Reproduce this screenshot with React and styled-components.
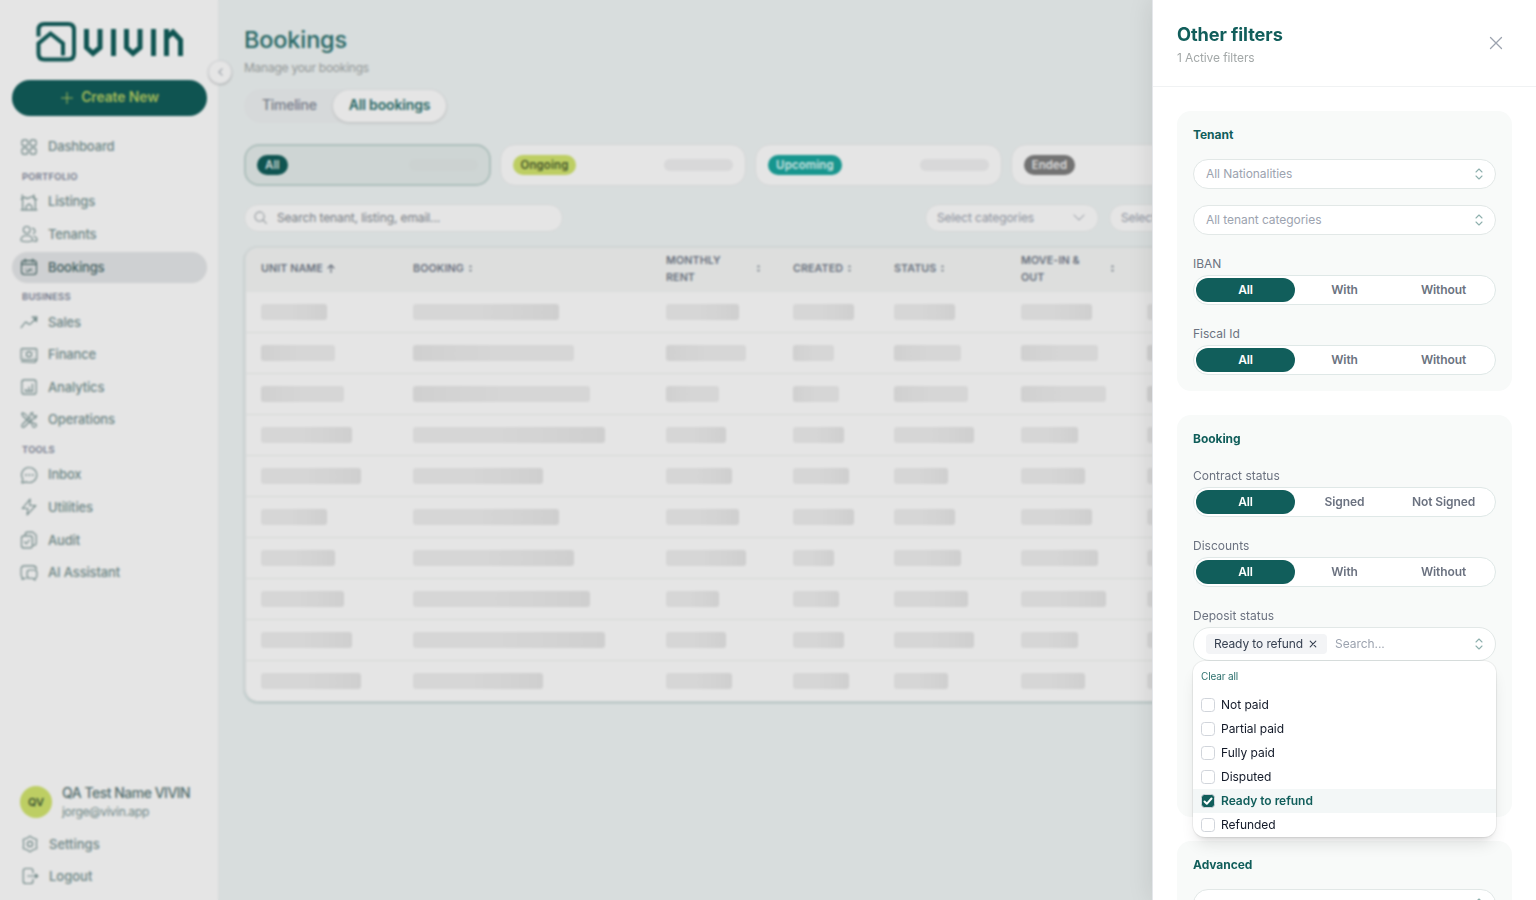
import React from 'react';
import styled, { createGlobalStyle, css } from 'styled-components';

const GlobalStyle = createGlobalStyle`
    * {
        box-sizing: border-box;
    }

    body {
        margin: 0;
        overflow: hidden;
        font-family: Inter, "Liberation Sans", sans-serif;
        font-size: 12px;
        color: #111827;
    }

    button, input {
        font: inherit;
        letter-spacing: inherit;
    }
`

const Page = styled.div`
    display: flex;
    width: 1536px;
    height: 900px;
    overflow: hidden;
    background-color: #f1f6f6;
`

/* sidebar */

const Sidebar = styled.aside`
    position: relative;
    display: flex;
    flex-direction: column;
    flex: none;
    width: 218px;
    padding: 22px 11px 8px 12px;
    background-color: #fff;
`

const Logo = styled.svg`
    display: block;
    flex: none;
    width: 148px;
    height: 40px;
    margin-left: 24px;
    fill: none;
    stroke: #115e5b;
`

const Collapse = styled.button`
    position: absolute;
    top: 60px;
    left: 208px;
    display: flex;
    align-items: center;
    justify-content: center;
    width: 24px;
    height: 24px;
    padding: 0;
    border: 1px solid #e9ebee;
    border-radius: 50%;
    background-color: #fff;
    box-shadow: 0 1px 2px rgba(0, 0, 0, .2);
    color: #b3b9c2;
`

const CreateButton = styled.button`
    display: flex;
    align-items: center;
    justify-content: center;
    gap: 8px;
    flex: none;
    height: 36px;
    margin: 18px 0 15.4px;
    padding: 0 0 3px 1px;
    border: 0;
    border-radius: 18px;
    background-color: #115e5b;
    color: #b5cf63;
    font-size: 14px;
    font-weight: 600;
    letter-spacing: -.15px;

    svg {
        margin-top: 3px;
    }
`

const Nav = styled.nav`
    display: flex;
    flex-direction: column;
    gap: 1.6px;
`

const NavLabel = styled.div`
    height: 20.8px;
    padding: 6px 10px 0;
    color: #7d8498;
    font-size: 9.4px;
    font-weight: 600;
    line-height: 14px;
    letter-spacing: .25px;
`

const NavItem = styled.a`
    display: flex;
    align-items: center;
    gap: 10px;
    height: 31px;
    padding: 0 8px;
    border-radius: 16px;
    color: ${({ active }) => (active ? '#4a6b6a' : '#7b9695')};
    background-color: ${({ active }) => (active ? '#e6e8ea' : 'transparent')};
    font-size: 13px;
    font-weight: 500;
    letter-spacing: -.15px;

    span {
        padding-bottom: 1px;
    }
`

const Account = styled.div`
    margin-top: auto;

    ${NavItem} {
        height: 32px;
        padding: 0 9px;
        letter-spacing: 0;
    }
`

const User = styled.div`
    display: flex;
    align-items: center;
    gap: 10px;
    height: 44px;
    margin-bottom: 4px;
    padding-left: 8px;
`

const Avatar = styled.div`
    display: flex;
    align-items: center;
    justify-content: center;
    width: 32px;
    height: 32px;
    border-radius: 50%;
    background-color: #d3e66f;
    color: #3f5b3a;
    font-size: 11px;
    font-weight: 600;
`

const UserName = styled.div`
    color: #5e7b7a;
    font-size: 14px;
    font-weight: 500;
    line-height: 20px;
    letter-spacing: -.5px;
    white-space: nowrap;
`

const UserMail = styled.div`
    padding-bottom: 2px;
    color: #7b9695;
    font-size: 12px;
    line-height: 17px;
    letter-spacing: -.3px;
`

/* main */

const Main = styled.main`
    flex: 1;
    min-width: 0;
    padding: 22px 23px 0 26px;
`

const Heading = styled.h1`
    margin: 0;
    color: #2c7370;
    font-size: 23.5px;
    font-weight: 500;
    line-height: 36px;
    letter-spacing: -.15px;
`

const SubHeading = styled.p`
    margin: 0;
    color: #a3a9a9;
    font-size: 12px;
    line-height: 20px;
    letter-spacing: -.25px;
`

const Tabs = styled.div`
    display: flex;
    width: max-content;
    height: 34px;
    margin: 11px 0 21px;
    padding: 1px;
    border-radius: 17px;
    background-color: #eff2f3;
`

const Tab = styled.button`
    height: 32px;
    padding: 0 16px 3px 17px;
    border: 0;
    border-radius: 16px;
    background-color: transparent;
    color: #848a98;
    font-size: 14px;
    font-weight: 500;
    letter-spacing: -.3px;

    ${({ active }) => active && css`
        padding: 0 16px 3px;
        background-color: #fff;
        box-shadow: 0 1px 3px rgba(0, 0, 0, .15);
        color: #2c7370;
        font-weight: 600;
        letter-spacing: -.15px;
    `}
`

const Cards = styled.div`
    display: grid;
    grid-template-columns: repeat(5, 1fr);
    gap: 8.75px;
    margin-bottom: 18px;
`

const StatusCard = styled.div`
    display: flex;
    align-items: center;
    justify-content: space-between;
    height: 42px;
    padding: 0 12px;
    border: 1px solid #eceff0;
    border-radius: 15px;
    background-color: #fff;

    ${({ active }) => active && css`
        padding: 0 11px;
        border: 2px solid #c3d6d3;
        background-color: #e6eeec;
    `}
`

const StatusPill = styled.span`
    height: 20px;
    padding: 0 8px;
    border-radius: 10px;
    background-color: ${({ bg }) => bg};
    color: ${({ color }) => color};
    font-size: 11.4px;
    font-weight: 600;
    line-height: 20px;
    letter-spacing: .15px;
`

const CountSkeleton = styled.span`
    width: 69px;
    height: 12px;
    border-radius: 6px;
    background-color: ${({ active }) => (active ? '#e4eae9' : '#f1f1f2')};
`

const Toolbar = styled.div`
    display: flex;
    gap: 10px;
    margin-bottom: 14px;
    padding-right: 230px;
`

const SearchBox = styled.div`
    display: flex;
    align-items: center;
    gap: 10px;
    width: 319px;
    height: 28px;
    margin-right: auto;
    padding: 0 10px 1px 9px;
    border: 1px solid #edf1f1;
    border-radius: 14px;
    background-color: #fff;
    color: #868d94;
    font-size: 12px;
    letter-spacing: -.1px;

    svg {
        color: #a9b0b5;
    }
`

const ToolSelect = styled.div`
    display: flex;
    align-items: center;
    justify-content: space-between;
    width: 174px;
    height: 28px;
    padding: 0 13px 1px 11px;
    border: 1px solid #edf1f1;
    border-radius: 14px;
    background-color: #fff;
    color: #9ca3af;
    font-size: 12px;
    letter-spacing: -.1px;
`

const Table = styled.div`
    overflow: hidden;
    border: 2px solid #e9eeee;
    border-bottom: 1px solid #e3e9e8;
    border-right: 0;
    border-radius: 14px;
    background-color: #fff;
    box-shadow: 0 1px 2px rgba(17, 94, 91, .25);
`

const TableRow = styled.div`
    display: grid;
    grid-template-columns: 152px 253px 127px 101px 127px 126px 1fr;
    align-items: center;
    height: 41px;
    border-bottom: 1px solid #eff2f1;

    &:last-child {
        height: 40px;
        border-bottom: 0;
    }
`

const TableHead = styled(TableRow)`
    height: 44px;
    padding-bottom: 3px;
    border-bottom: 0;
    background-color: #f6f8f7;
    color: #757d8c;
    font-size: 10.7px;
    font-weight: 600;
    line-height: 17px;
    letter-spacing: .1px;
`

const HeadCell = styled.div`
    display: flex;
    align-items: center;
    gap: 4px;
    padding: 0 17px 0 15px;

    span {
        flex: ${({ wrap }) => (wrap ? 1 : 'none')};
        padding-right: ${({ wrap }) => (wrap ? 12 : 0)}px;
    }
`

const Cell = styled.div`
    padding: 0 16px 0 15px;
`

const Skeleton = styled.div`
    height: 16px;
    border-radius: 3px;
    background: ${({ shade }) => (shade === 'left'
        ? 'linear-gradient(90deg, #e8e8e8, #efefef 50%)'
        : 'linear-gradient(90deg, #efefef 45%, #e7e7e7)')};
`

/* overlay and drawer */

const Overlay = styled.div`
    position: fixed;
    inset: 0;
    background-color: rgba(0, 0, 0, .1);
    backdrop-filter: blur(1px);
`

const Drawer = styled.section`
    position: fixed;
    top: 0;
    right: 0;
    bottom: 0;
    display: flex;
    flex-direction: column;
    width: 384px;
    overflow: hidden;
    border-left: 1px solid #e5e7eb;
    background-color: #fff;
    box-shadow: 0 0 24px rgba(0, 0, 0, .1);
`

const DrawerHead = styled.header`
    display: flex;
    align-items: center;
    justify-content: space-between;
    flex: none;
    height: 87px;
    padding: 0 33px 0 24px;
    border-bottom: 1px solid #f0f2f3;
    color: #9ca3af;
`

const DrawerTitle = styled.h2`
    margin: 2px 0 3px;
    color: #115e5b;
    font-size: 18.2px;
    font-weight: 700;
    line-height: 24px;
    letter-spacing: -.1px;
`

const DrawerSub = styled.div`
    color: #a3a8a8;
    font-size: 12px;
    line-height: 18px;
    letter-spacing: -.1px;
`

const DrawerBody = styled.div`
    display: flex;
    flex-direction: column;
    gap: 24px;
    padding: 24px;
`

const Group = styled.div`
    display: flex;
    flex-direction: column;
    gap: 16px;
    flex: none;
    min-height: ${({ minHeight }) => minHeight || 0}px;
    padding: 16px;
    border-radius: 14px;
    background-color: #f8faf9;
`

const GroupTitle = styled.h3`
    height: 16px;
    margin: 0;
    color: #115e5b;
    font-size: 12px;
    font-weight: 700;
    line-height: 16px;
    letter-spacing: -.05px;
`

const Field = styled.div`
    position: relative;
`

const Label = styled.div`
    height: 24px;
    padding-top: 2px;
    color: #6b7280;
    font-size: 12px;
    line-height: 22px;
`

const Select = styled.div`
    display: flex;
    align-items: center;
    gap: 8px;
    height: ${({ tall }) => (tall ? 34 : 30)}px;
    padding: 0 12px;
    border: 1px solid #e2e8e7;
    border-radius: 17px;
    background-color: #fff;
    color: #9ca3af;
    font-size: 12px;
    line-height: 16px;

    > span {
        padding-bottom: 1px;
        letter-spacing: -.05px;
    }

    > svg {
        margin-left: auto;
        color: #8fb0ae;
    }
`

const Chip = styled.div`
    display: flex;
    align-items: center;
    gap: 6px;
    width: 121px;
    height: 20px;
    padding: 0 8px 1px;
    border-radius: 4px;
    background-color: #f3f4f6;
    color: #374151;
    letter-spacing: -.1px;
`

const Segments = styled.div`
    display: grid;
    grid-template-columns: repeat(3, 1fr);
    height: 30px;
    padding: 2px;
    border: 1px solid #dfe8e7;
    border-radius: 15px;
    background-color: #fff;
`

const Segment = styled.button`
    padding: 0 0 1px;
    border: 0;
    border-radius: 12px;
    background-color: ${({ active }) => (active ? '#115e5b' : 'transparent')};
    color: ${({ active }) => (active ? '#fff' : '#6b7280')};
    font-size: 12px;
    font-weight: 600;
    letter-spacing: -.1px;
`

const Menu = styled.div`
    position: absolute;
    top: 58px;
    left: 0;
    z-index: 1;
    width: 303px;
    overflow: hidden;
    border-radius: 12px;
    background-color: #fff;
    box-shadow: 0 0 0 1px rgba(0, 0, 0, .05), 0 10px 15px -3px rgba(0, 0, 0, .1), 0 4px 6px -4px rgba(0, 0, 0, .15);
`

const ClearAll = styled.div`
    height: 32px;
    padding: 0 8px;
    color: #2b6f6c;
    font-size: 10px;
    line-height: 31px;
    letter-spacing: -.15px;
`

const Option = styled.div`
    display: flex;
    align-items: center;
    gap: 6px;
    height: 24px;
    padding: 0 8px;
    background-color: ${({ checked }) => (checked ? '#f3f7f7' : 'transparent')};
    color: ${({ checked }) => (checked ? '#115e5b' : '#111827')};
    font-weight: ${({ checked }) => (checked ? 600 : 400)};
    line-height: 16px;
`

const OptionName = styled.span`
    padding-bottom: 1px;
    letter-spacing: -.03px;
`

const Checkbox = styled.span`
    display: flex;
    align-items: center;
    justify-content: center;
    width: 14px;
    height: 14px;
    border: 1px solid #d1d5db;
    border-radius: 3.5px;
    background-color: ${({ checked }) => (checked ? '#115e5b' : '#fff')};
`

const Icon = styled.svg`
    flex: none;
    fill: none;
    stroke: currentColor;
    stroke-width: ${({ weight }) => weight || 1.5};
    stroke-linecap: round;
    stroke-linejoin: round;
`

// 24x24 outlines
const icons = {
    dashboard: (
        <>
            <rect x="2.5" y="2.5" width="8" height="8" rx="3" />
            <rect x="13.5" y="2.5" width="8" height="8" rx="3" />
            <rect x="2.5" y="13.5" width="8" height="8" rx="3" />
            <rect x="13.5" y="13.5" width="8" height="8" rx="3" />
        </>
    ),
    listings: (
        <>
            <path d="M1.5 22.5h21M3.5 22V8M20.5 22V9M1.5 8.5l4-3 4 2 9-3.5 1.5 4.5h2.5M3 2.5v4M18.5 2.5V8" />
            <path d="M8 22v-4l4-3.5 4 3.5V22" />
        </>
    ),
    tenants: (
        <>
            <circle cx="9" cy="6.5" r="4.5" />
            <path d="M16.5 4.5a3.7 3.7 0 0 1 1.5 7M1.5 21c-.8-4.5 2.5-7 7.5-7s8.3 2.5 7.5 7c-4 1.5-11 1.5-15 0zM18.5 21.5h3.8c1-3.5-1-6-3.8-6.5" />
        </>
    ),
    bookings: (
        <>
            <rect x="2" y="3.5" width="20" height="18.5" rx="4" />
            <path d="M7 1.5v4M17 1.5v4M2.5 8.5h19M8 18h3l4.5-3.5M8 14.5h.01M12 14.5h.01M16.5 18v.01" />
        </>
    ),
    sales: <path d="M1.5 19.5l5-6.5c1-1 2-1 3 0l1.5 1.5c1 1 2 1 3 0L21.5 7M16 5.5l6.5-.5-.5 6.5-1.5-3.5z" />,
    finance: (
        <>
            <rect x="1.5" y="3.5" width="21" height="15" rx="1.5" />
            <circle cx="12" cy="11" r="3.5" />
            <path d="M5 7v.01M19 7v.01M5 15v.01M19 15v.01M2 21l18 1 2.5-3.5" />
        </>
    ),
    analytics: (
        <>
            <rect x="2.5" y="2.5" width="19" height="19" rx="3" />
            <path d="M7.5 17.5V15M12 17.5V12M16.5 17.5V8M7 17.5h10" />
        </>
    ),
    operations: (
        <path d="M3 2.5l4 1.5 10.5 12 4 1.5c1 3-1 4.5-4 4L16 17.5 4 7 2.5 4zM17 2c-3 .5-4.5 3-3.5 5.5L3 18c-2 2.5.5 5 3 3L16.5 10.5C20 11 22 9 22 6l-3 1.5L16.5 5z" />
    ),
    inbox: (
        <>
            <path d="M12.5 2a10 10 0 1 1-4 19.2L2.5 22.5l1.3-5A10 10 0 0 1 12.5 2z" />
            <path d="M8 12h.01M12.5 12h.01M17 12h.01" strokeWidth="2.4" />
        </>
    ),
    utilities: <path d="M13.5 1.5L3 14h7.5L9.5 22.5 21 10h-8z" />,
    audit: (
        <>
            <rect x="2" y="6.5" width="14.5" height="16" rx="3" />
            <path d="M7 6V4.5a3 3 0 0 1 3-3h7l4.5 4V16a3 3 0 0 1-3 3h-2M6 14.5l2.5 2.5 4-5" />
        </>
    ),
    assistant: (
        <>
            <path d="M8 19H6l-3 1.5V18c-1-1-1.5-2-1.5-4V7c0-3 1.5-4.5 4.5-4.5h11c3 0 4.5 1.5 5 4" />
            <path d="M13 8h6c2.5 0 3.5 1 3.5 3.5v4c0 2-.7 3.2-2.5 3.5v2.5L17 19h-4c-2.5 0-3.5-1-3.5-3.5v-4C9.5 9 10.5 8 13 8z" />
        </>
    ),
    settings: (
        <>
            <path d="M12 1.5l3.5 2.5 5.5 2-.5 6 .5 6-5.5 2-3.5 2.5L8.5 20 3 18l.5-6L3 6l5.5-2z" />
            <circle cx="12" cy="12" r="3.5" />
        </>
    ),
    logout: <path d="M16 8V5.5c0-2.5-1-3.5-3.5-3.5h-6C4 2 3 3 3 5.5v13C3 21 4 22 6.5 22h6c2.5 0 3.5-1 3.5-3.5V16M9 12h13M19.5 9.5L22.5 12l-3 2.5z" />,
};

const NavIcon = ({ name, size = 18 }) => (
    <Icon viewBox="0 0 24 24" width={size} height={size}>{icons[name]}</Icon>
);

const UpDown = () => (
    <Icon viewBox="0 0 8 12" width="8" height="12" weight={1.1}>
        <path d="M1 4l3-3 3 3M1 8l3 3 3-3" />
    </Icon>
);

const SortIcon = () => (
    <Icon viewBox="0 0 5 9" width="5" height="9" weight={0.8}>
        <path d="M1.5 2.5l1-1 1 1zM1.5 6.5l1 1 1-1z" />
    </Icon>
);

const menu = [
    { items: [['dashboard', 'Dashboard']] },
    { label: 'PORTFOLIO', items: [['listings', 'Listings'], ['tenants', 'Tenants'], ['bookings', 'Bookings']] },
    { label: 'BUSINESS', items: [['sales', 'Sales'], ['finance', 'Finance'], ['analytics', 'Analytics'], ['operations', 'Operations']] },
    { label: 'TOOLS', items: [['inbox', 'Inbox'], ['utilities', 'Utilities'], ['audit', 'Audit'], ['assistant', 'AI Assistant']] },
];

const statuses = [
    { name: 'All', bg: '#115e5b', color: '#e3efee' },
    { name: 'Ongoing', bg: '#d3e66f', color: '#4d6130' },
    { name: 'Upcoming', bg: '#1aa79f', color: '#e8fffd' },
    { name: 'Ended', bg: '#808080', color: '#f3f3f3' },
];

const columns = [
    { name: 'UNIT NAME', sorted: true },
    { name: 'BOOKING' },
    { name: 'MONTHLY RENT', wrap: true },
    { name: 'CREATED' },
    { name: 'STATUS' },
    { name: 'MOVE-IN & OUT', wrap: true },
    { name: '' },
];

// placeholder widths, repeated every five rows
const widths = [
    [66, 146, 73, 61, 61, 71, 90],
    [74, 161, 80, 41, 67, 77, 110],
    [83, 177, 53, 46, 74, 85, 120],
    [91, 192, 60, 51, 80, 57, 90],
    [100, 130, 66, 56, 54, 64, 100],
];

const options = ['Not paid', 'Partial paid', 'Fully paid', 'Disputed', 'Ready to refund', 'Refunded'];

const SegmentField = ({ label, values }) => (
    <Field>
        <Label>{label}</Label>
        <Segments>
            {values.map((value, i) => <Segment key={value} active={i === 0 ? 1 : undefined}>{value}</Segment>)}
        </Segments>
    </Field>
);

const SideMenu = () => (
    <Sidebar>
        <Logo viewBox="36 22 148 40">
            <path strokeWidth="4" d="M38.5 36.5V30q0-6 6-6H68q6 0 6 6v23.5q0 6-6 6H44.5q-6 0-6-6V43.5L50.5 33.5l12.5 10V55.5" />
            <path strokeWidth="5" d="M86.5 29v18.5l6.5 6 7-6V29M113.5 29v27M126.5 29v18.5l6.5 6 7-6V29M153.5 29v27M166.5 56V29M166.5 38l6.5-6 7.5 8V56" />
        </Logo>
        <Collapse>
            <Icon viewBox="0 0 6 10" width="5" height="8"><path d="M5 1L1 5l4 4" /></Icon>
        </Collapse>
        <CreateButton>
            <Icon viewBox="0 0 12 12" width="12" height="12" weight={1}><path d="M6 .5v11M.5 6h11" /></Icon>
            Create New
        </CreateButton>
        <Nav>
            {menu.map(({ label, items }) => (
                <React.Fragment key={label || 'home'}>
                    {label && <NavLabel>{label}</NavLabel>}
                    {items.map(([icon, name]) => (
                        <NavItem key={name} active={name === 'Bookings' ? 1 : undefined}>
                            <NavIcon name={icon} />
                            <span>{name}</span>
                        </NavItem>
                    ))}
                </React.Fragment>
            ))}
        </Nav>
        <Account>
            <User>
                <Avatar>QV</Avatar>
                <div>
                    <UserName>QA Test Name VIVIN</UserName>
                    <UserMail>jorge@vivin.app</UserMail>
                </div>
            </User>
            <NavItem><NavIcon name="settings" /><span>Settings</span></NavItem>
            <NavItem><NavIcon name="logout" /><span>Logout</span></NavItem>
        </Account>
    </Sidebar>
);

const BookingsTable = () => (
    <Table>
        <TableHead>
            {columns.map(({ name, sorted, wrap }) => (
                <HeadCell key={name} wrap={wrap ? 1 : undefined}>
                    <span>{name}</span>
                    {sorted
                        ? <Icon viewBox="0 0 8 9" width="8" height="9" weight={1.2}><path d="M4 8.5V1M1 4l3-3 3 3" /></Icon>
                        : name && <SortIcon />}
                </HeadCell>
            ))}
        </TableHead>
        {Array.from({ length: 10 }, (_, row) => (
            <TableRow key={row}>
                {widths[row % 5].map((width, col) => (
                    <Cell key={col}>
                        <Skeleton style={{ width }} shade={row === 1 || row === 2 ? 'left' : 'right'} />
                    </Cell>
                ))}
            </TableRow>
        ))}
    </Table>
);

const Filters = () => (
    <Drawer>
        <DrawerHead>
            <div>
                <DrawerTitle>Other filters</DrawerTitle>
                <DrawerSub>1 Active filters</DrawerSub>
            </div>
            <Icon viewBox="0 0 14 14" width="14" height="14" weight={1.3}>
                <path d="M1.5 1.5l11 11M12.5 1.5l-11 11" />
            </Icon>
        </DrawerHead>
        <DrawerBody>
            <Group>
                <GroupTitle>Tenant</GroupTitle>
                <Select><span>All Nationalities</span><UpDown /></Select>
                <Select><span>All tenant categories</span><UpDown /></Select>
                <SegmentField label="IBAN" values={['All', 'With', 'Without']} />
                <SegmentField label="Fiscal Id" values={['All', 'With', 'Without']} />
            </Group>
            <Group minHeight={402}>
                <GroupTitle>Booking</GroupTitle>
                <SegmentField label="Contract status" values={['All', 'Signed', 'Not Signed']} />
                <SegmentField label="Discounts" values={['All', 'With', 'Without']} />
                <Field>
                    <Label>Deposit status</Label>
                    <Select tall={1}>
                        <Chip>
                            Ready to refund
                            <Icon viewBox="0 0 8 8" width="8" height="8" weight={1.1}><path d="M1.2 1.2l5.6 5.6M6.8 1.2L1.2 6.8" /></Icon>
                        </Chip>
                        <span>Search...</span>
                        <UpDown />
                    </Select>
                    <Menu>
                        <ClearAll>Clear all</ClearAll>
                        {options.map((name) => {
                            const checked = name === 'Ready to refund' ? 1 : undefined;
                            return (
                                <Option key={name} checked={checked}>
                                    <Checkbox checked={checked}>
                                        {checked && (
                                            <Icon viewBox="0 0 10 10" width="10" height="10" weight={2} color="#fff">
                                                <path d="M1.5 5.5l2.3 2.3L8.5 2.5" />
                                            </Icon>
                                        )}
                                    </Checkbox>
                                    <OptionName>{name}</OptionName>
                                </Option>
                            );
                        })}
                    </Menu>
                </Field>
            </Group>
            <Group>
                <GroupTitle>Advanced</GroupTitle>
                <Select><UpDown /></Select>
            </Group>
        </DrawerBody>
    </Drawer>
);

const App = () => (
    <>
        <GlobalStyle />
        <Page>
            <SideMenu />
            <Main>
                <Heading>Bookings</Heading>
                <SubHeading>Manage your bookings</SubHeading>
                <Tabs>
                    <Tab>Timeline</Tab>
                    <Tab active={1}>All bookings</Tab>
                </Tabs>
                <Cards>
                    {statuses.map(({ name, bg, color }, i) => (
                        <StatusCard key={name} active={i === 0 ? 1 : undefined}>
                            <StatusPill bg={bg} color={color}>{name}</StatusPill>
                            <CountSkeleton active={i === 0 ? 1 : undefined} />
                        </StatusCard>
                    ))}
                </Cards>
                <Toolbar>
                    <SearchBox>
                        <Icon viewBox="0 0 14 14" width="13" height="13" weight={1.2}>
                            <circle cx="6" cy="6" r="5" />
                            <path d="M9.8 9.8l3.5 3.5" />
                        </Icon>
                        Search tenant, listing, email...
                    </SearchBox>
                    {['Select categories', 'Select status'].map((name) => (
                        <ToolSelect key={name}>
                            {name}
                            <Icon viewBox="0 0 12 7" width="12" height="7" weight={1}><path d="M1 1l5 5 5-5" /></Icon>
                        </ToolSelect>
                    ))}
                </Toolbar>
                <BookingsTable />
            </Main>
        </Page>
        <Overlay />
        <Filters />
    </>
);

export default App;
